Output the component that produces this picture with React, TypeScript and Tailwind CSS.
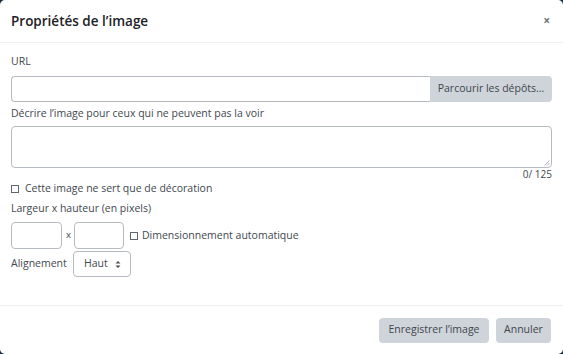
import React from "react";

const font = { fontFamily: '"Open Sans", "Noto Sans", sans-serif' };

export default function App() {
  return (
    <div className="w-[563px] h-[354px] bg-[#1b2a38]" style={font}>
      <div className="w-full h-full bg-white rounded-[5px] flex flex-col text-[10.5px] text-[#1d2125] whitespace-nowrap">
        {/* header */}
        <div className="h-[43px] flex items-center justify-between pl-[11px] pr-[13px] border-b border-[#eceef0] shrink-0">
          <div className="text-[13.5px] font-semibold text-[#1d2125]">Propriétés de l’image</div>
          <div className="text-[12px] text-[#6a737b] font-bold leading-none">×</div>
        </div>
        {/* body */}
        <div className="flex-1 px-[11px] pt-[10px] flex flex-col">
          <div className="leading-[16px] text-[#41484f]">URL</div>
          <div className="mt-[7px] flex h-[26px] w-[541px]">
            <div className="flex-1 border border-[#b6bbc1] rounded-l-[4px] border-r-0" />
            <div className="w-[122px] bg-[#ced4da] rounded-r-[4px] flex items-center justify-center text-[#3f464d]">
              Parcourir les dépôts...
            </div>
          </div>
          <div className="mt-[3px] leading-[16px] text-[#41484f]">Décrire l’image pour ceux qui ne peuvent pas la voir</div>
          <div className="mt-[5px] h-[42px] w-[541px] border border-[#b6bbc1] rounded-[4px] relative">
            <svg className="absolute right-[1px] bottom-[1px]" width="6" height="6" viewBox="0 0 6 6">
              <path d="M5.5 0.5 L0.5 5.5 M5.5 3 L3 5.5" stroke="#9aa0a6" strokeWidth="0.8" />
            </svg>
          </div>
          <div className="w-[541px] text-right text-[10px] leading-[12px] text-[#41484f]">0/ 125</div>
          <div className="mt-[2px] flex items-center h-[14px] text-[#41484f]">
            <span className="w-[8px] h-[8px] border border-[#5f666d] inline-block mr-[6px]" />
            <span>Cette image ne sert que de décoration</span>
          </div>
          <div className="mt-[4px] leading-[16px] text-[#41484f]">Largeur x hauteur (en pixels)</div>
          <div className="mt-[6px] flex items-center h-[27px]">
            <div className="w-[51px] h-[27px] border border-[#b6bbc1] rounded-[4px]" />
            <span className="ml-[4px] mr-[3px] text-[#41484f] text-[9.5px]">x</span>
            <div className="w-[50px] h-[27px] border border-[#b6bbc1] rounded-[4px]" />
            <span className="w-[8px] h-[8px] border border-[#5f666d] inline-block ml-[6px] mr-[4px]" />
            <span className="text-[#41484f]">Dimensionnement automatique</span>
          </div>
          <div className="mt-[2px] flex items-center h-[26px]">
            <span className="text-[#41484f] w-[62px]">Alignement</span>
            <div className="w-[58px] h-[26px] border border-[#b6bbc1] rounded-[4px] flex items-center pl-[10px] pr-[9px] justify-between text-[#41484f]">
              <span>Haut</span>
              <svg width="6" height="9" viewBox="0 0 6 9">
                <path d="M0.5 3.5 L3 1 L5.5 3.5 Z M0.5 5.5 L3 8 L5.5 5.5 Z" fill="#454c53" />
              </svg>
            </div>
          </div>
        </div>
        {/* footer */}
        <div className="h-[49px] border-t border-[#eceef0] flex items-center justify-end pr-[12px] gap-[7px] shrink-0">
          <div className="h-[25px] bg-[#ced4da] rounded-[4px] flex items-center text-[#3f464d] w-[110px] justify-center">Enregistrer l’image</div>
          <div className="h-[25px] bg-[#ced4da] rounded-[4px] flex items-center text-[#3f464d] w-[55px] justify-center">Annuler</div>
        </div>
      </div>
    </div>
  );
}
